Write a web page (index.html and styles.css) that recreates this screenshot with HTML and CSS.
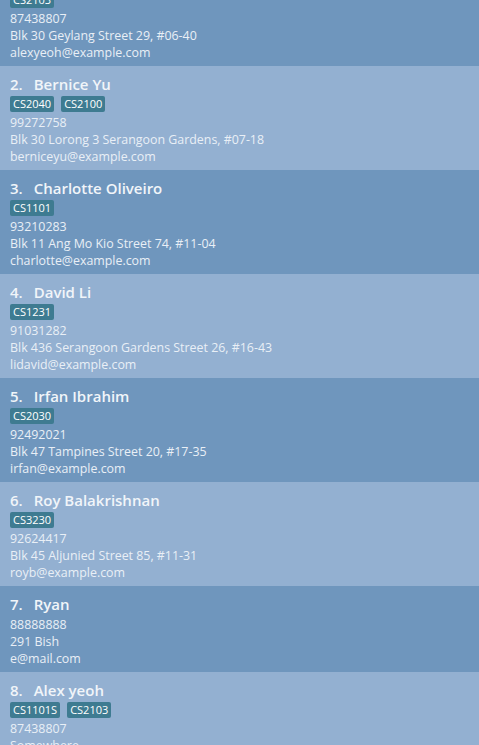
FILE: index.html
```html
<!DOCTYPE html>
<html>
<head>
<meta charset="utf-8">
<link rel="stylesheet" href="styles.css">
</head>
<body>
<div class="viewport">
  <ul class="list">
    <li class="card dark">
      <div class="name"><span class="idx">1.</span><span>Alex Yeoh</span></div>
      <div class="tags"><span class="tag">CS2103</span></div>
      <div class="line">87438807</div>
      <div class="line">Blk 30 Geylang Street 29, #06-40</div>
      <div class="line">alexyeoh@example.com</div>
    </li>
    <li class="card light">
      <div class="name"><span class="idx">2.</span><span>Bernice Yu</span></div>
      <div class="tags"><span class="tag">CS2040</span><span class="tag">CS2100</span></div>
      <div class="line">99272758</div>
      <div class="line">Blk 30 Lorong 3 Serangoon Gardens, #07-18</div>
      <div class="line">berniceyu@example.com</div>
    </li>
    <li class="card dark">
      <div class="name"><span class="idx">3.</span><span>Charlotte Oliveiro</span></div>
      <div class="tags"><span class="tag">CS1101</span></div>
      <div class="line">93210283</div>
      <div class="line">Blk 11 Ang Mo Kio Street 74, #11-04</div>
      <div class="line">charlotte@example.com</div>
    </li>
    <li class="card light">
      <div class="name"><span class="idx">4.</span><span>David Li</span></div>
      <div class="tags"><span class="tag">CS1231</span></div>
      <div class="line">91031282</div>
      <div class="line">Blk 436 Serangoon Gardens Street 26, #16-43</div>
      <div class="line">lidavid@example.com</div>
    </li>
    <li class="card dark">
      <div class="name"><span class="idx">5.</span><span>Irfan Ibrahim</span></div>
      <div class="tags"><span class="tag">CS2030</span></div>
      <div class="line">92492021</div>
      <div class="line">Blk 47 Tampines Street 20, #17-35</div>
      <div class="line">irfan@example.com</div>
    </li>
    <li class="card light">
      <div class="name"><span class="idx">6.</span><span>Roy Balakrishnan</span></div>
      <div class="tags"><span class="tag">CS3230</span></div>
      <div class="line">92624417</div>
      <div class="line">Blk 45 Aljunied Street 85, #11-31</div>
      <div class="line">royb@example.com</div>
    </li>
    <li class="card dark">
      <div class="name"><span class="idx">7.</span><span>Ryan</span></div>
      <div class="line">88888888</div>
      <div class="line">291 Bish</div>
      <div class="line">e@mail.com</div>
    </li>
    <li class="card light">
      <div class="name"><span class="idx">8.</span><span>Alex yeoh</span></div>
      <div class="tags"><span class="tag">CS1101S</span><span class="tag">CS2103</span></div>
      <div class="line">87438807</div>
      <div class="line">Somewhere</div>
      <div class="line">alex@example.com</div>
    </li>
  </ul>
</div>
</body>
</html>
```
FILE: styles.css
```css
html, body {
  margin: 0;
  padding: 0;
  background: #93b0d1;
}
.viewport {
  height: 745px;
  overflow: hidden;
}
.list {
  list-style: none;
  margin: -38px 0 0 0;
  padding: 0;
  font-family: "Open Sans", "Noto Sans", sans-serif;
  color: #e9eff6;
}
.card {
  padding: 5px 10px 5px 10px;
}
.dark { background: #6f96bd; }
.light { background: #93b0d1; }
.name {
  display: flex;
  gap: 11px;
  height: 25px;
  align-items: center;
  font-size: 15px;
  font-weight: 600;
  color: #f1f5f9;
}
.tags {
  display: flex;
  gap: 7px;
  height: 18px;
  align-items: flex-start;
}
.tag {
  background: #3e7b91;
  color: #ffffff;
  font-size: 11px;
  line-height: 16px;
  height: 16px;
  padding: 0 3px;
  border-radius: 2px;
}
.line {
  font-size: 12.4px;
  line-height: 17px;
  white-space: nowrap;
}
```
